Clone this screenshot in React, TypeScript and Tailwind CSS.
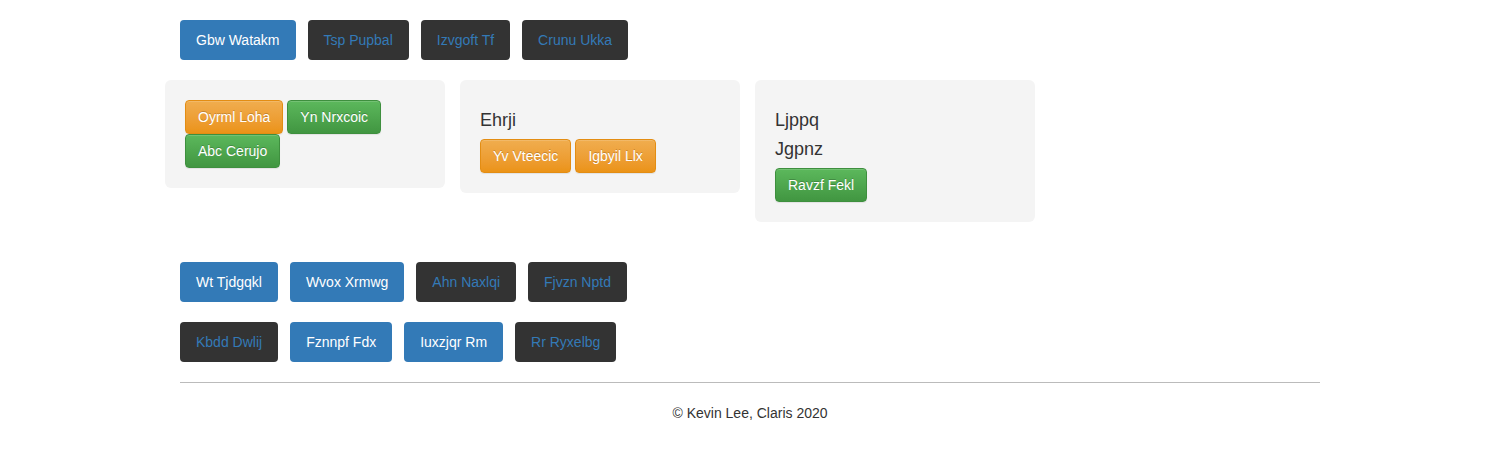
import type { ReactNode } from 'react'

type Tone = 'blue' | 'dark'

const navTop: { label: string; tone: Tone }[] = [
  { label: 'Gbw Watakm', tone: 'blue' },
  { label: 'Tsp Pupbal', tone: 'dark' },
  { label: 'Izvgoft Tf', tone: 'dark' },
  { label: 'Crunu Ukka', tone: 'dark' },
]

const navRowA: { label: string; tone: Tone }[] = [
  { label: 'Wt Tjdgqkl', tone: 'blue' },
  { label: 'Wvox Xrmwg', tone: 'blue' },
  { label: 'Ahn Naxlqi', tone: 'dark' },
  { label: 'Fjvzn Nptd', tone: 'dark' },
]

const navRowB: { label: string; tone: Tone }[] = [
  { label: 'Kbdd Dwlij', tone: 'dark' },
  { label: 'Fznnpf Fdx', tone: 'blue' },
  { label: 'Iuxzjqr Rm', tone: 'blue' },
  { label: 'Rr Ryxelbg', tone: 'dark' },
]

function NavButton({ label, tone }: { label: string; tone: Tone }) {
  return (
    <button
      type="button"
      className={`h-10 rounded-[4px] px-4 text-[14px] leading-5 ${
        tone === 'blue' ? 'bg-[#337ab7] text-white' : 'bg-[#333333] text-[#337ab7]'
      }`}
    >
      {label}
    </button>
  )
}

function NavRow({ items }: { items: { label: string; tone: Tone }[] }) {
  return (
    <div className="flex gap-3">
      {items.map((b) => (
        <NavButton key={b.label} {...b} />
      ))}
    </div>
  )
}

function ThemeButton({ label, kind }: { label: string; kind: 'warning' | 'success' }) {
  return (
    <button
      type="button"
      className={`h-[34px] rounded-[4px] border px-3 text-[14px] leading-5 text-white [text-shadow:0_-1px_0_rgba(0,0,0,0.2)] shadow-[inset_0_1px_0_rgba(255,255,255,0.15),0_1px_1px_rgba(0,0,0,0.075)] ${
        kind === 'warning'
          ? 'border-[#e38d13] bg-gradient-to-b from-[#f0ad4e] to-[#eb9316]'
          : 'border-[#3e8f3e] bg-gradient-to-b from-[#5cb85c] to-[#419641]'
      }`}
    >
      {label}
    </button>
  )
}

function Card({ children }: { children: ReactNode }) {
  return <div className="w-[280px] rounded-[6px] bg-[#f4f4f4] p-5">{children}</div>
}

function Heading({ children, first }: { children: ReactNode; first?: boolean }) {
  return (
    <h4 className={`mb-[9px] text-[18px] leading-5 text-[#333] ${first ? 'mt-[10px]' : ''}`}>
      {children}
    </h4>
  )
}

export default function App() {
  return (
    <div className="min-h-[453px] bg-white font-['Liberation_Sans',Arial,sans-serif] text-[14px] text-[#333]">
      <div className="mx-auto w-[1170px] pt-5">
        <div className="px-[15px]">
          <NavRow items={navTop} />
        </div>

        <div className="mt-5 flex items-start gap-[15px]">
          <Card>
            <div className="flex flex-wrap gap-x-1">
              <ThemeButton label="Oyrml Loha" kind="warning" />
              <ThemeButton label="Yn Nrxcoic" kind="success" />
              <ThemeButton label="Abc Cerujo" kind="success" />
            </div>
          </Card>
          <Card>
            <Heading first>Ehrji</Heading>
            <div className="flex gap-1">
              <ThemeButton label="Yv Vteecic" kind="warning" />
              <ThemeButton label="Igbyil Llx" kind="warning" />
            </div>
          </Card>
          <Card>
            <Heading first>Ljppq</Heading>
            <Heading>Jgpnz</Heading>
            <ThemeButton label="Ravzf Fekl" kind="success" />
          </Card>
        </div>

        <div className="mt-10 flex flex-col gap-5 px-[15px]">
          <NavRow items={navRowA} />
          <NavRow items={navRowB} />
        </div>

        <div className="px-[15px]">
          <hr className="mt-5 border-t border-[#bbbbbb]" />
          <p className="mt-5 text-center leading-5">© Kevin Lee, Claris 2020</p>
        </div>
      </div>
    </div>
  )
}
